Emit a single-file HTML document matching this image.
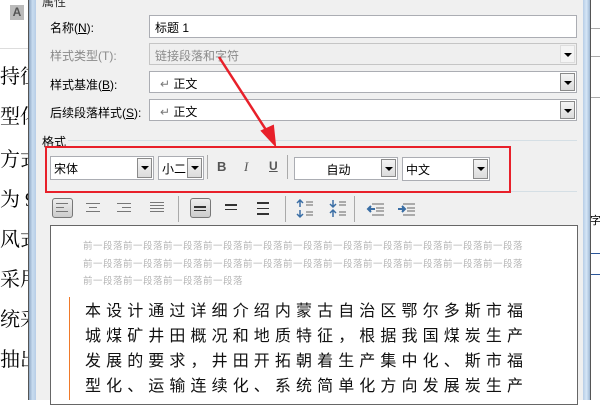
<!DOCTYPE html>
<html><head><meta charset="utf-8"><style>
*{margin:0;padding:0;box-sizing:border-box}
body{width:600px;height:400px;overflow:hidden;position:relative;background:#fff;font-family:"Liberation Sans","Noto Sans CJK SC",sans-serif;font-size:12px;color:#000}
.a{position:absolute}
.dlg{left:36px;top:0;width:548px;height:400px;background:#f0f0f0}
.lbl{font-size:12px}
.tb{background:#fff;border:1px solid #abadb3;height:22px;font-size:12px;padding:3px 5px}
.dd{position:absolute;right:1px;top:1px;width:15px;height:18px;background:linear-gradient(#f4f4f4,#dcdcdc);border:1px solid #8a8a8a}
.dd:after{content:"";position:absolute;left:3px;top:7px;border-left:4px solid transparent;border-right:4px solid transparent;border-top:4px solid #000}
.bg{font-family:"Liberation Serif","Noto Serif CJK SC",serif;font-size:20px;left:0}
.pv{color:#b4b4b4;font-size:9.5px;letter-spacing:0.5px;left:83px;white-space:nowrap}
.mt{left:85px;font-size:16px;letter-spacing:5.1px;white-space:nowrap;font-family:"Liberation Sans","WenQuanYi Zen Hei",sans-serif;color:#111}
.ln{background:#333;height:1.5px;width:14px}
</style></head><body>
<div class="a" style="left:10px;top:5px;width:14px;height:15px;background:#bbb;color:#555;font-weight:bold;font-size:12px;text-align:center;line-height:15px">A</div>
<div class="a" style="left:0;top:48px;width:30px;height:1px;background:#ddd"></div>
<div class="a bg" style="top:60px">持徝</div>
<div class="a bg" style="top:100px">型化</div>
<div class="a bg" style="top:143px">方式</div>
<div class="a bg" style="top:183px">为 9</div>
<div class="a bg" style="top:223px">风式</div>
<div class="a bg" style="top:263px">采用</div>
<div class="a bg" style="top:303px">统采</div>
<div class="a bg" style="top:343px">抽出</div>
<div class="a" style="left:28px;top:0;width:8px;height:400px;background:linear-gradient(90deg,#8fa8c4,#c9dcf0,#b7cde6);border-left:1px solid #555"></div>
<div class="a dlg"></div>
<div class="a" style="left:583px;top:0;width:8px;height:400px;background:linear-gradient(90deg,#b7cde6,#d6e6f7,#9fb8d4);border-right:1px solid #555"></div>
<div class="a" style="left:591px;top:0;width:9px;height:400px;background:#fff"></div>
<div class="a" style="left:591px;top:28px;width:9px;height:1px;background:#aaa"></div>
<div class="a" style="left:591px;top:56px;width:9px;height:1px;background:#aaa"></div>
<div class="a" style="left:591px;top:97px;width:9px;height:1px;background:#aaa"></div>
<div class="a" style="left:591px;top:253px;width:9px;height:1px;background:#2b579a"></div>
<div class="a" style="left:591px;top:274px;width:9px;height:1px;background:#2b579a"></div>
<div class="a" style="left:590px;top:212px;font-size:11px">字</div>
<div class="a lbl" style="left:42px;top:-7px;color:#333">属性</div>
<div class="a lbl" style="left:50px;top:19px">名称(<u>N</u>):</div>
<div class="a tb" style="left:149px;top:15px;width:428px;height:23px">标题 1</div>
<div class="a lbl" style="left:50px;top:47px;color:#8a8a8a">样式类型(T):</div>
<div class="a tb" style="left:149px;top:43px;width:428px;background:#efefef;border-color:#c5c5c5;color:#8a8a8a">链接段落和字符<div class="dd" style="background:#f4f4f4;border-color:#ddd"></div></div>
<div class="a lbl" style="left:50px;top:76px">样式基准(<u>B</u>):</div>
<div class="a tb" style="left:149px;top:71px;width:428px;padding-left:10px"><span style="color:#777">↵</span> 正文<div class="dd"></div></div>
<div class="a lbl" style="left:50px;top:104px">后续段落样式(<u>S</u>):</div>
<div class="a tb" style="left:149px;top:99px;width:428px;padding-left:10px"><span style="color:#777">↵</span> 正文<div class="dd"></div></div>
<div class="a lbl" style="left:42px;top:133px">格式</div>
<div class="a" style="left:68px;top:140px;width:509px;height:1px;background:#d5dfe5"></div>
<div class="a tb" style="left:50px;top:156px;width:104px;height:24px;padding:3px 3px">宋体<div class="dd" style="height:20px"></div></div>
<div class="a tb" style="left:158px;top:156px;width:46px;height:24px;padding:3px 3px">小二<div class="dd" style="height:20px"></div></div>
<div class="a" style="left:207px;top:155px;width:1px;height:24px;background:#aaa"></div>
<div class="a" style="left:217px;top:159px;font-weight:bold;color:#555;font-size:13px">B</div>
<div class="a" style="left:244px;top:159px;font-style:italic;color:#555;font-size:13px;font-family:'Liberation Serif',serif">I</div>
<div class="a" style="left:269px;top:159px;text-decoration:underline;font-weight:bold;color:#555;font-size:12px">U</div>
<div class="a" style="left:287px;top:155px;width:1px;height:24px;background:#aaa"></div>
<div class="a tb" style="left:294px;top:157px;width:104px;height:23px;text-align:center;padding-right:20px">自动<div class="dd"></div></div>
<div class="a tb" style="left:402px;top:157px;width:88px;height:24px;padding:3px 3px">中文<div class="dd" style="height:20px"></div></div>
<div class="a" style="left:45px;top:146px;width:466px;height:47px;border:2px solid #e8202a"></div>
<div class="a" style="left:511px;top:191px;width:66px;height:1px;background:#d5dfe5"></div>
<div class="a" style="left:52px;top:198px;width:21px;height:20px;border:1px solid #777;border-radius:3px;background:linear-gradient(#eee,#ccc)"></div>
<div class="a" style="left:56px;top:203px"><div style="width:12px;background:#777;height:1px;margin-bottom:3px"></div><div style="width:8px;background:#777;height:1px;margin-bottom:3px"></div><div style="width:12px;background:#777;height:1px"></div></div>
<div class="a" style="left:86px;top:203px"><div style="width:14px;height:1px;background:#777;margin-bottom:3px"></div><div style="width:8px;margin-left:3px;height:1px;background:#777;margin-bottom:3px"></div><div style="width:14px;height:1px;background:#777"></div></div>
<div class="a" style="left:117px;top:203px"><div style="width:14px;height:1px;background:#777;margin-bottom:3px"></div><div style="width:9px;margin-left:5px;height:1px;background:#777;margin-bottom:3px"></div><div style="width:14px;height:1px;background:#777"></div></div>
<div class="a" style="left:150px;top:202px"><div style="width:14px;height:1px;background:#777;margin-bottom:2px"></div><div style="width:14px;height:1px;background:#777;margin-bottom:2px"></div><div style="width:14px;height:1px;background:#777;margin-bottom:2px"></div><div style="width:14px;height:1px;background:#777"></div></div>
<div class="a" style="left:178px;top:196px;width:1px;height:26px;background:#aaa"></div>
<div class="a" style="left:190px;top:198px;width:21px;height:20px;border:1px solid #777;border-radius:3px;background:linear-gradient(#eee,#ccc)"></div>
<div class="a" style="left:194px;top:206px"><div class="ln" style="width:12px;margin-bottom:2px"></div><div class="ln" style="width:12px"></div></div>
<div class="a" style="left:225px;top:204px"><div class="ln" style="width:12px;margin-bottom:3px"></div><div class="ln" style="width:12px"></div></div>
<div class="a" style="left:257px;top:202px"><div class="ln" style="width:12px;margin-bottom:4px"></div><div class="ln" style="width:12px;margin-bottom:4px"></div><div class="ln" style="width:12px"></div></div>
<div class="a" style="left:285px;top:196px;width:1px;height:26px;background:#aaa"></div>
<svg class="a" style="left:296px;top:199px" width="120" height="20">
<g stroke="#3a6ea5" stroke-width="1.5" fill="none"><path d="M4 1v7M1 4l3-3 3 3M4 11v7M1 15l3 3 3-3"/><path d="M37 1v7M34 5l3 3 3-3M37 11v7M34 14l3-3 3 3"/></g>
<g stroke="#666" stroke-width="1"><path d="M10 3h7M10 6h7M10 13h7M10 16h7M43 3h7M43 6h7M43 13h7M43 16h7"/><path d="M76 5h12M80 9h8M80 12h8M76 16h12M107 5h12M111 9h8M111 12h8M107 16h12"/></g>
<g stroke="#3a6ea5" stroke-width="2" fill="#3a6ea5"><path d="M72 10h7M75 7l-3 3 3 3"/><path d="M102 10h7M106 7l3 3-3 3"/></g>
</svg>
<div class="a" style="left:354px;top:196px;width:1px;height:26px;background:#aaa"></div>
<div class="a" style="left:50px;top:225px;width:528px;height:180px;background:#fff;border:1px solid #666"></div>
<div class="a pv" style="top:238px">前一段落前一段落前一段落前一段落前一段落前一段落前一段落前一段落前一段落前一段落前一段落</div>
<div class="a pv" style="top:256px">前一段落前一段落前一段落前一段落前一段落前一段落前一段落前一段落前一段落前一段落前一段落</div>
<div class="a pv" style="top:273px">前一段落前一段落前一段落前一段落</div>
<div class="a" style="left:69px;top:297px;width:1px;height:103px;background:#f07a2a"></div>
<div class="a mt" style="top:297px">本设计通过详细介绍内蒙古自治区鄂尔多斯市福</div>
<div class="a mt" style="top:322px">城煤矿井田概况和地质特征，根据我国煤炭生产</div>
<div class="a mt" style="top:347px">发展的要求，井田开拓朝着生产集中化、斯市福</div>
<div class="a mt" style="top:372px">型化、运输连续化、系统简单化方向发展炭生产</div>
<svg class="a" style="left:0;top:0" width="600" height="400"><line x1="219" y1="57" x2="268" y2="133" stroke="#e8202a" stroke-width="2.5"/><polygon points="275,145 262,131 273,126" fill="#e8202a" stroke="#e8202a" stroke-width="2"/></svg>
</body></html>
